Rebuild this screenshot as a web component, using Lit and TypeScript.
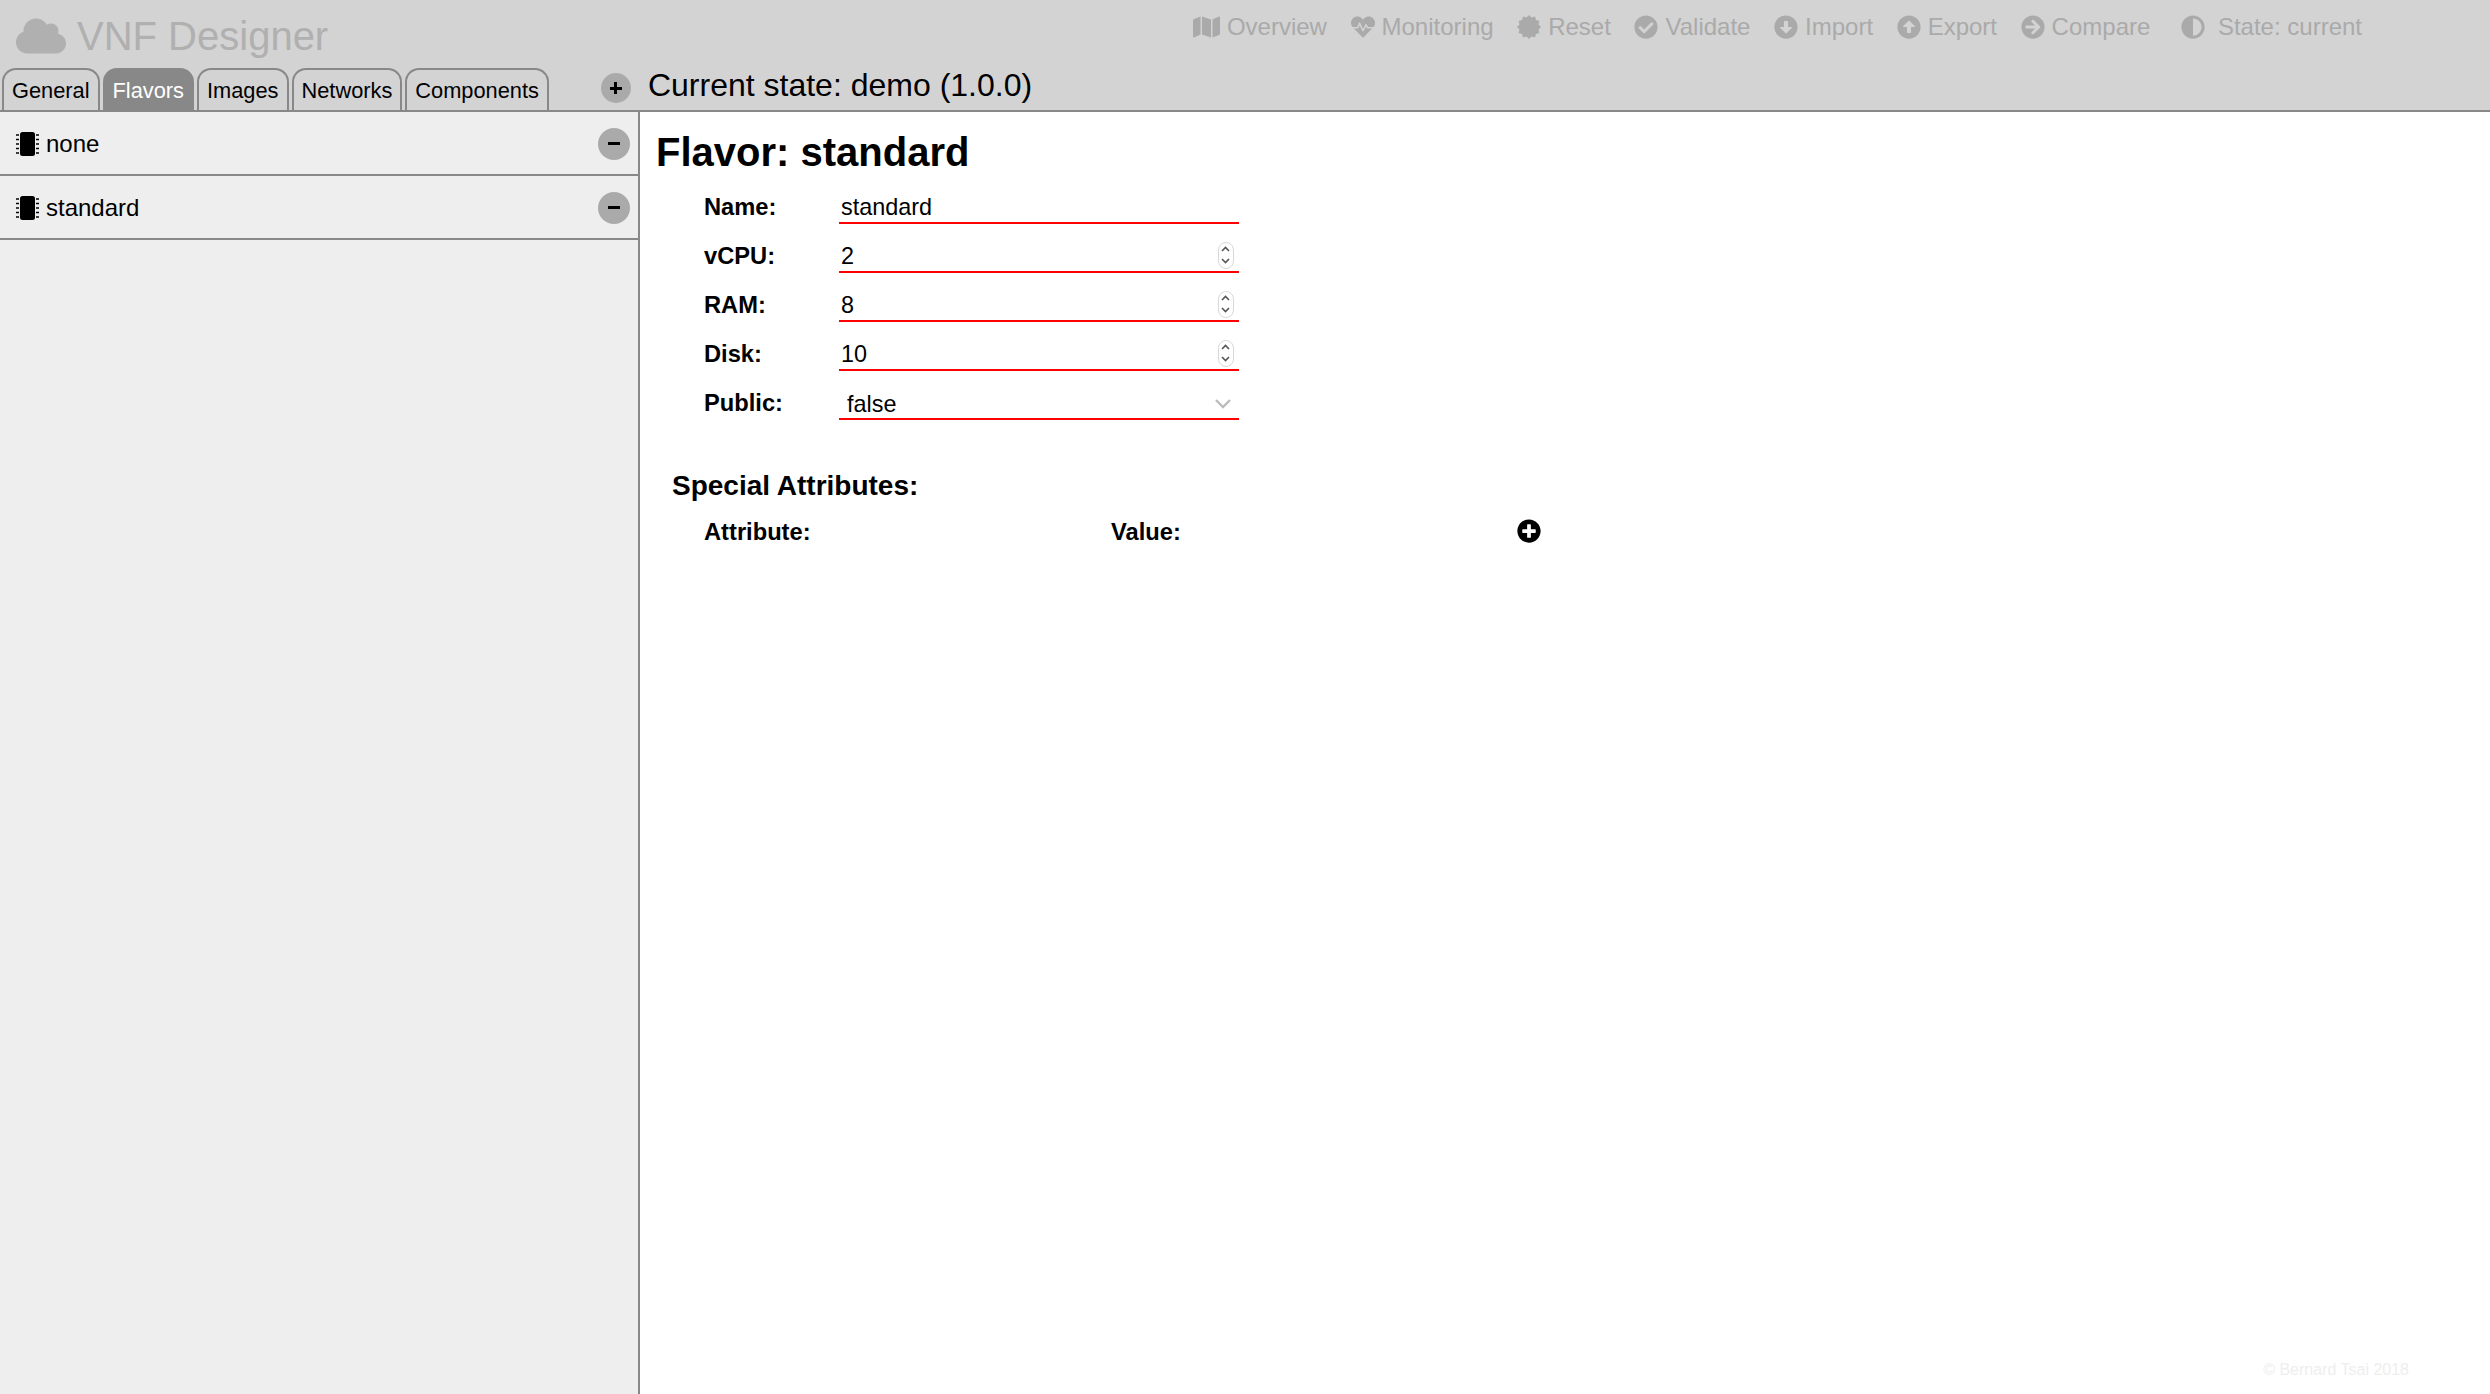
import { LitElement, html, css, svg } from 'lit';
import { customElement } from 'lit/decorators.js';

const ARROW_DOWN = 'M504 256c0 137-111 248-248 248S8 393 8 256 119 8 256 8s248 111 248 248zM212 140v116h-70.9c-10.7 0-16.1 13-8.5 20.5l114.9 114.3c4.7 4.7 12.2 4.7 16.9 0l114.9-114.3c7.6-7.6 2.2-20.5-8.5-20.5H300V140c0-6.6-5.4-12-12-12h-64c-6.6 0-12 5.4-12 12z';
const PLUS_CIRCLE = 'M256 8C119 8 8 119 8 256s111 248 248 248 248-111 248-248S393 8 256 8zm144 276c0 6.6-5.4 12-12 12h-92v92c0 6.6-5.4 12-12 12h-56c-6.6 0-12-5.4-12-12v-92h-92c-6.6 0-12-5.4-12-12v-56c0-6.6 5.4-12 12-12h92v-92c0-6.6 5.4-12 12-12h56c6.6 0 12 5.4 12 12v92h92c6.6 0 12 5.4 12 12v56z';

// certificate icon: a 12 point burst
const burst = Array.from({ length: 24 }, (_, i) => {
  const r = i % 2 ? 210 : 256;
  const a = (i * Math.PI) / 12;
  return `${256 + r * Math.sin(a)},${256 - r * Math.cos(a)}`;
}).join(' ');

const icons: Record<string, { box: string; body: unknown }> = {
  map: {
    box: '0 0 576 512',
    body: svg`<path d="M0 117.66v346.32c0 11.32 11.43 19.06 21.94 14.86L160 416V32L20.12 87.95A32.006 32.006 0 0 0 0 117.66zM192 416l192 64V96L192 32v384zM554.06 33.16L416 96v384l139.88-55.95A31.996 31.996 0 0 0 576 394.34V48.02c0-11.32-11.43-19.06-21.94-14.86z"/>`
  },
  heartbeat: {
    box: '0 0 512 512',
    body: svg`<path d="M320.2 243.8l-49.7 99.4c-6 12.1-23.4 11.7-28.9-.6l-56.9-126.3-30 71.7H60.6l182.5 186.5c7.1 7.3 18.6 7.3 25.7 0L451.4 288H342.3l-22.1-44.2zM473.7 73.9l-2.4-2.5c-51.5-52.6-135.8-52.6-187.4 0L256 100l-27.9-28.5c-51.5-52.7-135.9-52.7-187.4 0l-2.4 2.4C-10.4 123.7-12.5 203 31 256h102.4l35.9-86.2c5.4-12.9 23.6-13.2 29.4-.4l58.2 129.3 49-97.9c5.9-11.8 22.7-11.8 28.6 0l27.6 55.2H481c43.5-53 41.4-132.3-7.3-182.1z"/>`
  },
  certificate: { box: '0 0 512 512', body: svg`<polygon points=${burst}/>` },
  check: {
    box: '0 0 512 512',
    body: svg`<path d="M504 256c0 136.967-111.033 248-248 248S8 392.967 8 256 119.033 8 256 8s248 111.033 248 248zM227.314 387.314l184-184c6.248-6.248 6.248-16.379 0-22.627l-22.627-22.627c-6.248-6.249-16.379-6.249-22.628 0L216 308.118l-70.059-70.059c-6.248-6.248-16.379-6.248-22.628 0l-22.627 22.627c-6.248 6.248-6.248 16.379 0 22.627l104 104c6.249 6.249 16.379 6.249 22.628.001z"/>`
  },
  down: { box: '0 0 512 512', body: svg`<path d=${ARROW_DOWN}/>` },
  up: { box: '0 0 512 512', body: svg`<path d=${ARROW_DOWN} transform="rotate(180 256 256)"/>` },
  right: {
    box: '0 0 512 512',
    body: svg`<path d="M256 8c137 0 248 111 248 248S393 504 256 504 8 393 8 256 119 8 256 8zm-28.9 143.6l75.5 72.4H120c-13.3 0-24 10.7-24 24v16c0 13.3 10.7 24 24 24h182.6l-75.5 72.4c-9.7 9.3-9.9 24.8-.4 34.3l11 10.9c9.4 9.4 24.6 9.4 33.9 0L404.3 273c9.4-9.4 9.4-24.6 0-33.9L271.6 106.3c-9.4-9.4-24.6-9.4-33.9 0l-11 10.9c-9.5 9.6-9.3 25.1.4 34.4z"/>`
  },
  adjust: {
    box: '0 0 512 512',
    body: svg`<path d="M8 256c0 136.966 111.033 248 248 248s248-111.034 248-248S392.966 8 256 8 8 119.033 8 256zm248 184V72c101.705 0 184 82.311 184 184 0 101.705-82.311 184-184 184z"/>`
  },
  cloud: {
    box: '0 0 640 512',
    body: svg`<path d="M537.6 226.6c4.1-10.7 6.4-22.4 6.4-34.6 0-53-43-96-96-96-19.7 0-38.1 6-53.3 16.2C367 64.2 315.3 32 256 32c-88.4 0-160 71.6-160 160 0 2.7.1 5.4.2 8.1C40.2 219.8 0 273.2 0 336c0 79.5 64.5 144 144 144h368c70.7 0 128-57.3 128-128 0-61.9-44-113.6-102.4-125.4z"/>`
  },
  plusCircle: { box: '0 0 512 512', body: svg`<path d=${PLUS_CIRCLE}/>` },
  chip: {
    box: '0 0 23 24',
    body: svg`<rect x="4" y="0" width="15" height="24" rx="2.5"/>
      ${[3, 7.5, 12, 16.5, 21].map(
        y => svg`<rect x="0" y=${y - 0.75} width="3" height="1.5"/><rect x="20" y=${y - 0.75} width="3" height="1.5"/>`
      )}`
  }
};

const icon = (name: string, w: number, h: number) => html`
  <svg class="icon" viewBox=${icons[name].box} width=${w} height=${h} fill="currentColor">${icons[name].body}</svg>
`;

const NAV = [
  { icon: 'map', w: 27, label: 'Overview' },
  { icon: 'heartbeat', w: 24, label: 'Monitoring' },
  { icon: 'certificate', w: 24, label: 'Reset' },
  { icon: 'check', w: 24, label: 'Validate' },
  { icon: 'down', w: 24, label: 'Import' },
  { icon: 'up', w: 24, label: 'Export' },
  { icon: 'right', w: 24, label: 'Compare' }
];

const TABS = ['General', 'Flavors', 'Images', 'Networks', 'Components'];
const FLAVORS = ['none', 'standard'];
const NUMBERS = [
  { label: 'vCPU:', value: '2' },
  { label: 'RAM:', value: '8' },
  { label: 'Disk:', value: '10' }
];

@customElement('app-root')
export class AppRoot extends LitElement {
  static styles = css`
    :host {
      display: flex;
      flex-direction: column;
      height: 100vh;
      font-family: 'Liberation Sans', Arial, sans-serif;
      color: #000;
      background: #fff;
    }

    .icon {
      display: block;
      flex: none;
    }

    header {
      flex: none;
      height: 110px;
      box-sizing: content-box;
      background: #d3d3d3;
      border-bottom: 2px solid #888;
      display: flex;
      flex-direction: column;
    }

    .top {
      height: 68px;
      display: flex;
      justify-content: space-between;
      align-items: flex-start;
    }

    .logo {
      display: flex;
      align-items: center;
      gap: 11px;
      padding: 13px 0 0 16px;
      color: #b0b0b0;
      font-size: 40px;
      line-height: 46px;
    }

    nav {
      display: flex;
      gap: 23.6px;
      padding: 13px 128px 0 0;
      color: #aaa;
      font-size: 24px;
      line-height: 28px;
    }

    .nav-item {
      display: flex;
      align-items: center;
      gap: 7px;
    }

    .nav-item.state {
      margin-left: 7px;
      gap: 13px;
    }

    .bar {
      flex: 1;
      display: flex;
      align-items: flex-end;
      padding-left: 2px;
    }

    .tabs {
      display: flex;
      gap: 3px;
    }

    .tab {
      height: 42px;
      box-sizing: border-box;
      padding: 0 8px;
      border: 2px solid #888;
      border-bottom: none;
      border-radius: 14px 14px 0 0;
      font-size: 21.8px;
      line-height: 42px;
    }

    .tab.active {
      background: #888;
      color: #fff;
    }

    .round {
      flex: none;
      display: flex;
      align-items: center;
      justify-content: center;
      border-radius: 50%;
      background: #aaa;
      color: #000;
    }

    .round i {
      display: block;
      width: 12px;
      height: 3px;
      background: currentColor;
    }

    .round.add {
      position: relative;
      width: 30px;
      height: 30px;
    }

    .round.add::after {
      content: '';
      position: absolute;
      width: 3px;
      height: 12px;
      background: currentColor;
    }

    .bar .round {
      margin: 0 17px 7px 52px;
    }

    .current {
      align-self: center;
      font-size: 32px;
      line-height: 36px;
      margin-bottom: 7px;
    }

    .content {
      flex: 1;
      display: flex;
      min-height: 0;
    }

    aside {
      flex: none;
      width: 638px;
      background: #eee;
      border-right: 2px solid #888;
    }

    .flavor {
      display: flex;
      align-items: center;
      padding: 1px 8px 0 16px;
      height: 61px;
      border-bottom: 2px solid #888;
      font-size: 24px;
    }

    .flavor span {
      flex: 1;
      margin-left: 7px;
    }

    .flavor .round {
      width: 32px;
      height: 32px;
    }

    main {
      flex: 1;
      display: flex;
      flex-direction: column;
      padding: 17px 81px 15px 16px;
    }

    h1 {
      margin: 0 0 9px;
      font-size: 40px;
      line-height: 46px;
      font-weight: bold;
    }

    .fields {
      display: flex;
      flex-direction: column;
      gap: 9px;
      margin-left: 48px;
    }

    .field {
      display: flex;
      align-items: flex-end;
      font-size: 23.4px;
    }

    label,
    .col {
      font-size: 23.7px;
      font-weight: bold;
      line-height: 27px;
    }

    label {
      width: 135px;
      padding-bottom: 3px;
    }

    .control {
      position: relative;
      width: 400px;
      height: 40px;
    }

    input,
    select {
      display: block;
      width: 100%;
      height: 100%;
      box-sizing: border-box;
      margin: 0;
      padding: 9px 0 0 2px;
      border: none;
      border-bottom: 2px solid #f00;
      border-radius: 0;
      outline: none;
      appearance: none;
      background: transparent;
      color: #000;
      font: inherit;
    }

    select {
      padding-left: 8px;
    }

    .spinner,
    .chevron {
      position: absolute;
      pointer-events: none;
    }

    .spinner {
      right: 5px;
      top: 9px;
      width: 16px;
      height: 27px;
      box-sizing: border-box;
      border: 1.5px solid #d8d8d8;
      border-radius: 8px;
      background: #fff;
    }

    .chevron {
      right: 8px;
      top: 19px;
      color: #bbb;
    }

    h2 {
      margin: 50px 0 0 16px;
      font-size: 28px;
      line-height: 32px;
      font-weight: bold;
    }

    .attrs {
      display: flex;
      align-items: center;
      margin: 17px 0 0 48px;
    }

    .attrs .icon {
      margin-bottom: 3px;
    }

    .col:first-child {
      width: 407px;
    }

    .col:nth-child(2) {
      width: 406px;
    }

    footer {
      margin-top: auto;
      align-self: flex-end;
      font-size: 16px;
      line-height: 18px;
      color: #eee;
    }
  `;

  renderSpinner() {
    return html`
      <div class="spinner">
        <svg viewBox="0 0 13 24" width="13" height="24" fill="none" stroke="#555" stroke-width="1.6">
          <path d="M3 8l3.5-3.5L10 8M3 16l3.5 3.5L10 16" />
        </svg>
      </div>
    `;
  }

  render() {
    return html`
      <header>
        <div class="top">
          <div class="logo">${icon('cloud', 50, 40)}<span>VNF Designer</span></div>
          <nav>
            ${NAV.map(
              n => html`<div class="nav-item">${icon(n.icon, n.w, 24)}<span>${n.label}</span></div>`
            )}
            <div class="nav-item state">${icon('adjust', 24, 24)}<span>State: current</span></div>
          </nav>
        </div>
        <div class="bar">
          <div class="tabs">
            ${TABS.map(t => html`<div class="tab ${t === 'Flavors' ? 'active' : ''}">${t}</div>`)}
          </div>
          <div class="round add"><i></i></div>
          <div class="current">Current state: demo (1.0.0)</div>
        </div>
      </header>
      <div class="content">
        <aside>
          ${FLAVORS.map(
            f => html`
              <div class="flavor">
                ${icon('chip', 23, 24)}
                <span>${f}</span>
                <div class="round"><i></i></div>
              </div>
            `
          )}
        </aside>
        <main>
          <h1>Flavor: standard</h1>
          <div class="fields">
            <div class="field">
              <label>Name:</label>
              <div class="control"><input type="text" .value=${'standard'} /></div>
            </div>
            ${NUMBERS.map(
              n => html`
                <div class="field">
                  <label>${n.label}</label>
                  <div class="control">
                    <input type="text" .value=${n.value} />
                    ${this.renderSpinner()}
                  </div>
                </div>
              `
            )}
            <div class="field">
              <label>Public:</label>
              <div class="control">
                <select><option>false</option><option>true</option></select>
                <svg class="chevron" viewBox="0 0 16 10" width="16" height="10" fill="none" stroke="currentColor" stroke-width="2.4">
                  <path d="M1 1l7 7 7-7" />
                </svg>
              </div>
            </div>
          </div>
          <h2>Special Attributes:</h2>
          <div class="attrs">
            <div class="col">Attribute:</div>
            <div class="col">Value:</div>
            ${icon('plusCircle', 24, 24)}
          </div>
          <footer>© Bernard Tsai 2018</footer>
        </main>
      </div>
    `;
  }
}
